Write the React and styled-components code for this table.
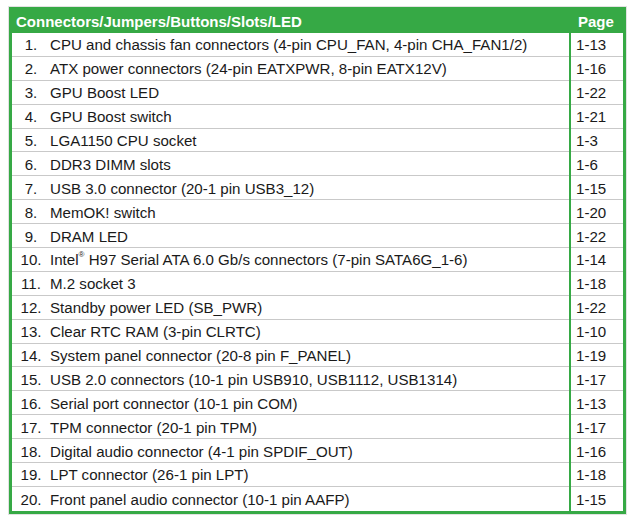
import React from 'react';
import styled, { createGlobalStyle } from 'styled-components';

const GlobalStyle = createGlobalStyle`
  html, body {
    margin: 0;
    padding: 0;
    background: #ffffff;
  }
  body {
    font-family: "Liberation Sans", Arial, sans-serif;
    color: #1a1a1a;
  }
`;

const GREEN = '#36a945';

const Page = styled.div`
  width: 640px;
  height: 523px;
  padding: 7px 0 0 9px;
  box-sizing: border-box;
`;

const Table = styled.div`
  width: 617px;
  border: 3px solid ${GREEN};
  border-top: 0;
  box-sizing: border-box;
  outline: 1px solid #e2e2e2;
`;

const HeaderRow = styled.div`
  display: grid;
  grid-template-columns: 1fr 52px;
  height: 26px;
  background: ${GREEN};
  color: #ffffff;
  font-weight: bold;
  font-size: 15px;
  align-items: center;
  margin: 0 -3px;
`;

const HeaderCell = styled.div`
  padding-left: ${p => p.pad}px;
  padding-top: 2px;
`;

const Row = styled.div`
  display: grid;
  grid-template-columns: 38px 1fr 2px 52px;
  height: 23.9px;
  box-sizing: border-box;
  align-items: center;
  font-size: 15.1px;
  border-bottom: ${p => (p.last ? 'none' : '1px solid #c9c9c9')};
`;

const Num = styled.div`
  text-align: center;
  padding-top: 1px;
`;

const Desc = styled.div`
  white-space: nowrap;
  padding-top: 1px;
`;

const Divider = styled.div`
  align-self: stretch;
  background: ${GREEN};
  margin-bottom: ${p => (p.last ? 0 : -1)}px;
`;

const PageNo = styled.div`
  padding-left: 5px;
  padding-top: 1px;
`;

const Sup = styled.sup`
  font-size: 8px;
  vertical-align: top;
  position: relative;
  top: -1px;
`;

const items = [
  ['CPU and chassis fan connectors (4-pin CPU_FAN, 4-pin CHA_FAN1/2)', '1-13'],
  ['ATX power connectors (24-pin EATXPWR, 8-pin EATX12V)', '1-16'],
  ['GPU Boost LED', '1-22'],
  ['GPU Boost switch', '1-21'],
  ['LGA1150 CPU socket', '1-3'],
  ['DDR3 DIMM slots', '1-6'],
  ['USB 3.0 connector (20-1 pin USB3_12)', '1-15'],
  ['MemOK! switch', '1-20'],
  ['DRAM LED', '1-22'],
  [<>Intel<Sup>®</Sup> H97 Serial ATA 6.0 Gb/s connectors (7-pin SATA6G_1-6)</>, '1-14'],
  ['M.2 socket 3', '1-18'],
  ['Standby power LED (SB_PWR)', '1-22'],
  ['Clear RTC RAM (3-pin CLRTC)', '1-10'],
  ['System panel connector (20-8 pin F_PANEL)', '1-19'],
  ['USB 2.0 connectors (10-1 pin USB910, USB1112, USB1314)', '1-17'],
  ['Serial port connector (10-1 pin COM)', '1-13'],
  ['TPM connector (20-1 pin TPM)', '1-17'],
  ['Digital audio connector (4-1 pin SPDIF_OUT)', '1-16'],
  ['LPT connector (26-1 pin LPT)', '1-18'],
  ['Front panel audio connector (10-1 pin AAFP)', '1-15'],
];

export default function App() {
  return (
    <Page>
      <GlobalStyle />
      <Table>
        <HeaderRow>
          <HeaderCell pad={7}>Connectors/Jumpers/Buttons/Slots/LED</HeaderCell>
          <HeaderCell pad={4}>Page</HeaderCell>
        </HeaderRow>
        {items.map(([text, page], i) => {
          const last = i === items.length - 1;
          return (
            <Row key={i} last={last}>
              <Num>{i + 1}.</Num>
              <Desc>{text}</Desc>
              <Divider last={last} />
              <PageNo>{page}</PageNo>
            </Row>
          );
        })}
      </Table>
    </Page>
  );
}
